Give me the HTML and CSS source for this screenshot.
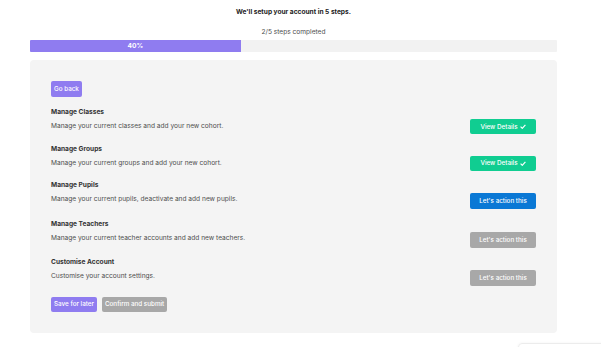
FILE: index.html
```html
<!DOCTYPE html>
<html lang="en">
  <head>
    <meta charset="UTF-8" />
    <meta name="viewport" content="width=device-width, initial-scale=1.0" />
    <title>Account Setup</title>
    <link rel="stylesheet" href="styles.css">
  </head>
  <body>
    <h1 class="title">We'll setup your account in 5 steps.</h1>
    <p class="progress-label">2/5 steps completed</p>
    <div class="progress">
      <div class="progress-fill" style="width: 40%">40%</div>
    </div>

    <div class="card">
      <button class="btn purple back">Go back</button>

      <div class="step">
        <div class="step-text">
          <h3>Manage Classes</h3>
          <p>Manage your current classes and add your new cohort.</p>
        </div>
        <button class="btn green action">View Details <svg class="check" viewBox="0 0 10 8"><path d="M1 4.2 L3.8 7 L9 1.2" /></svg></button>
      </div>

      <div class="step">
        <div class="step-text">
          <h3>Manage Groups</h3>
          <p>Manage your current groups and add your new cohort.</p>
        </div>
        <button class="btn green action">View Details <svg class="check" viewBox="0 0 10 8"><path d="M1 4.2 L3.8 7 L9 1.2" /></svg></button>
      </div>

      <div class="step">
        <div class="step-text">
          <h3>Manage Pupils</h3>
          <p>Manage your current pupils, deactivate and add new pupils.</p>
        </div>
        <button class="btn blue action tall">Let's action this</button>
      </div>

      <div class="step">
        <div class="step-text">
          <h3>Manage Teachers</h3>
          <p>Manage your current teacher accounts and add new teachers.</p>
        </div>
        <button class="btn grey action tall">Let's action this</button>
      </div>

      <div class="step">
        <div class="step-text">
          <h3>Customise Account</h3>
          <p>Customise your account settings.</p>
        </div>
        <button class="btn grey action tall">Let's action this</button>
      </div>

      <div class="footer-buttons">
        <button class="btn purple">Save for later</button>
        <button class="btn grey">Confirm and submit</button>
      </div>
    </div>

    <div class="chat-widget"></div>
  </body>
</html>
```

FILE: styles.css
```css
body {
  margin: 0 14px 0 0;
  font-family: Inter, "Noto Sans", sans-serif;
  background-color: #ffffff;
  color: #333333;
}
.title {
  margin: 7px 0 0;
  font-size: 6.6px;
  line-height: 10px;
  font-weight: 700;
  text-align: center;
  color: #222222;
}
.progress-label {
  margin: 10px 0 0;
  font-size: 6.6px;
  line-height: 10px;
  text-align: center;
  color: #4d4d4d;
}
.progress {
  margin: 3px 30px 0;
  height: 12px;
  background-color: #f2f2f2;
  border-radius: 1px;
  overflow: hidden;
}
.progress-fill {
  height: 100%;
  background-color: #8f7cf0;
  color: white;
  font-size: 6.6px;
  font-weight: 700;
  line-height: 12px;
  text-align: center;
}
.card {
  margin: 8px 30px 0;
  padding: 21px;
  background-color: #f4f4f4;
  border-radius: 4px;
  font-size: 6.6px;
}
.btn {
  display: flex;
  align-items: center;
  justify-content: center;
  gap: 2px;
  height: 15px;
  padding: 0 3px;
  border: none;
  border-radius: 2px;
  font-family: inherit;
  font-size: 6.3px;
  font-weight: 500;
  color: white;
  cursor: pointer;
}
.purple {
  background-color: #8f7cf0;
}
.green {
  background-color: #10cd91;
}
.blue {
  background-color: #0a78d5;
}
.grey {
  background-color: #a8a8a8;
}
.back {
  width: fit-content;
  height: 16px;
  margin-bottom: 11px;
}
.step {
  display: flex;
  justify-content: space-between;
  align-items: flex-start;
  margin-bottom: 10.5px;
}
.step h3 {
  margin: 0 0 5px;
  font-size: 6.6px;
  line-height: 9px;
  font-weight: 700;
  color: #333333;
}
.step p {
  margin: 0;
  font-size: 6.6px;
  line-height: 9px;
  color: #4d4d4d;
}
.action {
  width: 66px;
  margin-top: 11px;
}
.action.tall {
  height: 16px;
  margin-top: 12px;
}
.check {
  width: 6px;
  height: 5px;
  fill: none;
  stroke: white;
  stroke-width: 2;
}
.footer-buttons {
  display: flex;
  gap: 5px;
  margin-top: 0;
}
.chat-widget {
  position: fixed;
  left: 518px;
  top: 343px;
  width: 100px;
  height: 20px;
  border: 1px solid #ececec;
  border-radius: 4px;
  box-shadow: 0 0 3px rgba(0, 0, 0, 0.05);
}
```
